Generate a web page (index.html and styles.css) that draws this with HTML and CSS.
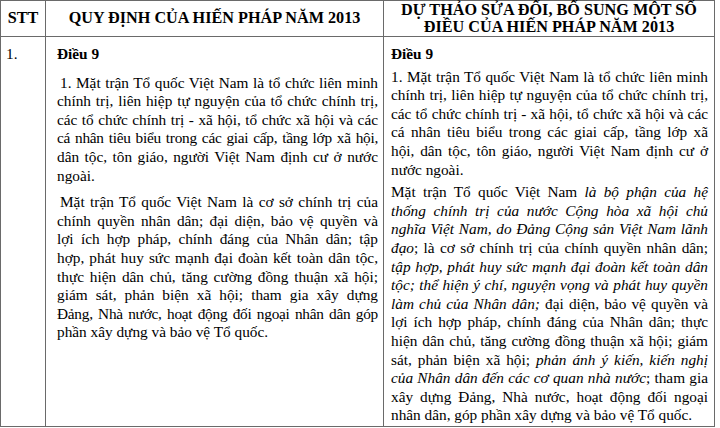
FILE: index.html
```html
<!DOCTYPE html>
<html lang="vi">
<head>
<meta charset="utf-8">
<title>So sánh Điều 9</title>
<link rel="stylesheet" href="styles.css">
</head>
<body>
<table class="cmp">
  <colgroup>
    <col class="c-stt">
    <col class="c-old">
    <col class="c-new">
  </colgroup>
  <thead>
    <tr>
      <th class="h-stt">STT</th>
      <th class="h-old">QUY ĐỊNH CỦA HIẾN PHÁP NĂM 2013</th>
      <th class="h-new">DỰ THẢO SỬA ĐỔI, BỔ SUNG MỘT SỐ<br>ĐIỀU CỦA HIẾN PHÁP NĂM 2013</th>
    </tr>
  </thead>
  <tbody>
    <tr>
      <td class="stt">1.</td>
      <td class="old">
        <div class="art">Điều 9</div>
        <p class="para">
          <span class="ln first">1. Mặt trận Tổ quốc Việt Nam là tổ chức liên minh</span>
          <span class="ln">chính trị, liên hiệp tự nguyện của tổ chức chính trị,</span>
          <span class="ln">các tổ chức chính trị - xã hội, tổ chức xã hội và các</span>
          <span class="ln tight">cá nhân tiêu biểu trong các giai cấp, tầng lớp xã hội,</span>
          <span class="ln">dân tộc, tôn giáo, người Việt Nam định cư ở nước</span>
          <span class="ln end">ngoài.</span>
        </p>
        <p class="para">
          <span class="ln first">Mặt trận Tổ quốc Việt Nam là cơ sở chính trị của</span>
          <span class="ln">chính quyền nhân dân; đại diện, bảo vệ quyền và</span>
          <span class="ln">lợi ích hợp pháp, chính đáng của Nhân dân; tập</span>
          <span class="ln">hợp, phát huy sức mạnh đại đoàn kết toàn dân tộc,</span>
          <span class="ln">thực hiện dân chủ, tăng cường đồng thuận xã hội;</span>
          <span class="ln">giám sát, phản biện xã hội; tham gia xây dựng</span>
          <span class="ln tight">Đảng, Nhà nước, hoạt động đối ngoại nhân dân góp</span>
          <span class="ln end">phần xây dựng và bảo vệ Tổ quốc.</span>
        </p>
      </td>
      <td class="new">
        <div class="art">Điều 9</div>
        <p class="para">
          <span class="ln">1. Mặt trận Tổ quốc Việt Nam là tổ chức liên minh</span>
          <span class="ln">chính trị, liên hiệp tự nguyện của tổ chức chính trị,</span>
          <span class="ln">các tổ chức chính trị - xã hội, tổ chức xã hội và các</span>
          <span class="ln">cá nhân tiêu biểu trong các giai cấp, tầng lớp xã</span>
          <span class="ln">hội, dân tộc, tôn giáo, người Việt Nam định cư ở</span>
          <span class="ln end">nước ngoài.</span>
        </p>
        <p class="para">
          <span class="ln">Mặt trận Tổ quốc Việt Nam <em>là bộ phận của hệ</em></span>
          <span class="ln"><em>thống chính trị của nước Cộng hòa xã hội chủ</em></span>
          <span class="ln"><em>nghĩa Việt Nam, do Đảng Cộng sản Việt Nam lãnh</em></span>
          <span class="ln"><em>đạo</em>; là cơ sở chính trị của chính quyền nhân dân;</span>
          <span class="ln"><em>tập hợp, phát huy sức mạnh đại đoàn kết toàn dân</em></span>
          <span class="ln"><em>tộc; thể hiện ý chí, nguyện vọng và phát huy quyền</em></span>
          <span class="ln"><em>làm chủ của Nhân dân;</em> đại diện, bảo vệ quyền và</span>
          <span class="ln">lợi ích hợp pháp, chính đáng của Nhân dân; thực</span>
          <span class="ln">hiện dân chủ, tăng cường đồng thuận xã hội; giám</span>
          <span class="ln">sát, phản biện xã hội; <em>phản ánh ý kiến, kiến nghị</em></span>
          <span class="ln"><em>của Nhân dân đến các cơ quan nhà nước</em>; tham gia</span>
          <span class="ln">xây dựng Đảng, Nhà nước, hoạt động đối ngoại</span>
          <span class="ln end">nhân dân, góp phần xây dựng và bảo vệ Tổ quốc.</span>
        </p>
      </td>
    </tr>
  </tbody>
</table>
</body>
</html>
```

FILE: styles.css
```css
html, body {
  margin: 0;
  padding: 0;
  background: #fff;
}
body {
  font-family: "Liberation Serif", "Times New Roman", serif;
  color: #000;
}
.cmp {
  border-collapse: collapse;
  table-layout: fixed;
  width: 714px;
}
.c-stt { width: 45px; }
.c-old { width: 338px; }
.c-new { width: 331px; }
.cmp th, .cmp td {
  border: 1.5px solid #6a6a6a;
  vertical-align: top;
}
.cmp th {
  height: 36px;
  padding: 0;
  font-size: 16.2px;
  line-height: 17px;
  font-weight: bold;
  text-align: center;
  vertical-align: middle;
  box-sizing: border-box;
}
.cmp td {
  height: 388px;
  box-sizing: border-box;
  font-size: 15.3px;
  line-height: 18.6px;
  padding-top: 8px;
}
.stt {
  padding-left: 5px;
}
.old {
  padding-left: 11px;
  padding-right: 5px;
}
.new {
  padding-left: 7px;
  padding-right: 6px;
}
.art {
  font-weight: bold;
}
.para {
  margin: 0;
}
.new .art {
  margin-bottom: 4px;
}
.new .para + .para {
  margin-top: 4px;
}
.old .art {
  margin-bottom: 10px;
}
.old .para + .para {
  margin-top: 8px;
}
.ln {
  display: block;
  text-align: justify;
  text-align-last: justify;
  white-space: nowrap;
}
.ln.end {
  text-align-last: left;
}
.ln.first {
  padding-left: 3px;
}
.ln.tight {
  letter-spacing: -0.25px;
}
em {
  font-style: italic;
}
```
